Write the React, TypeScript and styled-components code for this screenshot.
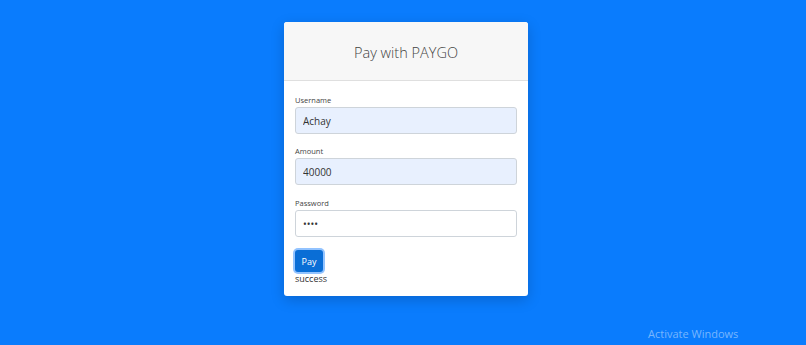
import React from "react";
import styled, { createGlobalStyle } from "styled-components";

const Global = createGlobalStyle`
  html, body {
    margin: 0;
    padding: 0;
    background: #0a7cfd;
    font-family: "Open Sans", "Noto Sans", sans-serif;
  }
`;

const Page = styled.div`
  position: relative;
  width: 806px;
  height: 345px;
  background: #0a7cfd;
  display: flex;
  justify-content: center;
  align-items: flex-start;
  padding: 22px 0 0 6px;
  box-sizing: border-box;
  overflow: hidden;
`;

const Card = styled.div`
  width: 244px;
  background: #fff;
  border-radius: 3px;
  box-shadow: 0 4px 14px rgba(0, 0, 0, 0.18);
  overflow: hidden;
`;

const Header = styled.div`
  height: 58px;
  background: #f7f7f7;
  border-bottom: 1px solid #dfdfdf;
  display: flex;
  align-items: center;
  justify-content: center;

  h3 {
    margin: 2px 0 0;
    font-size: 14.5px;
    font-weight: 300;
    color: #444;
  }
`;

const Body = styled.form`
  padding: 14px 11px 11px;
  display: flex;
  flex-direction: column;
`;

const Field = styled.div<{ $gap?: number }>`
  display: flex;
  flex-direction: column;
  margin-bottom: 12px;
  margin-top: ${(p) => p.$gap ?? 0}px;
`;

const Label = styled.label`
  font-size: 7.5px;
  color: #444;
  margin-bottom: 2px;
`;

const Input = styled.input<{ $filled?: boolean }>`
  height: 27px;
  box-sizing: border-box;
  border: 1px solid #ced4da;
  border-radius: 3px;
  padding: 0 7px;
  font-family: inherit;
  font-size: 10px;
  color: #333;
  background: ${(p) => (p.$filled ? "#e8f0fe" : "#fff")};
  outline: none;
`;

const Button = styled.button`
  align-self: flex-start;
  margin-top: 1px;
  width: 28px;
  height: 22px;
  border: none;
  border-radius: 3px;
  background: #0a6ed6;
  color: #fff;
  font-family: inherit;
  font-size: 9px;
  padding: 0;
  box-shadow: 0 0 0 2px rgba(100, 170, 255, 0.7);
`;

const Status = styled.div`
  font-size: 9px;
  line-height: 12px;
  color: #333;
  margin-top: 1px;
`;

const Watermark = styled.div`
  position: absolute;
  left: 648px;
  top: 326px;
  font-family: "Open Sans", sans-serif;
  font-size: 11px;
  color: rgba(255, 255, 255, 0.45);
`;

export default function App() {
  return (
    <>
      <Global />
      <Page>
        <Card>
          <Header>
            <h3>Pay with PAYGO</h3>
          </Header>
          <Body onSubmit={(e) => e.preventDefault()}>
            <Field>
              <Label>Username</Label>
              <Input $filled defaultValue="Achay" />
            </Field>
            <Field>
              <Label>Amount</Label>
              <Input $filled defaultValue="40000" />
            </Field>
            <Field $gap={1}>
              <Label>Password</Label>
              <Input type="password" defaultValue="1234" />
            </Field>
            <Button type="submit">Pay</Button>
            <Status>success</Status>
          </Body>
        </Card>
        <Watermark>Activate Windows</Watermark>
      </Page>
    </>
  );
}
